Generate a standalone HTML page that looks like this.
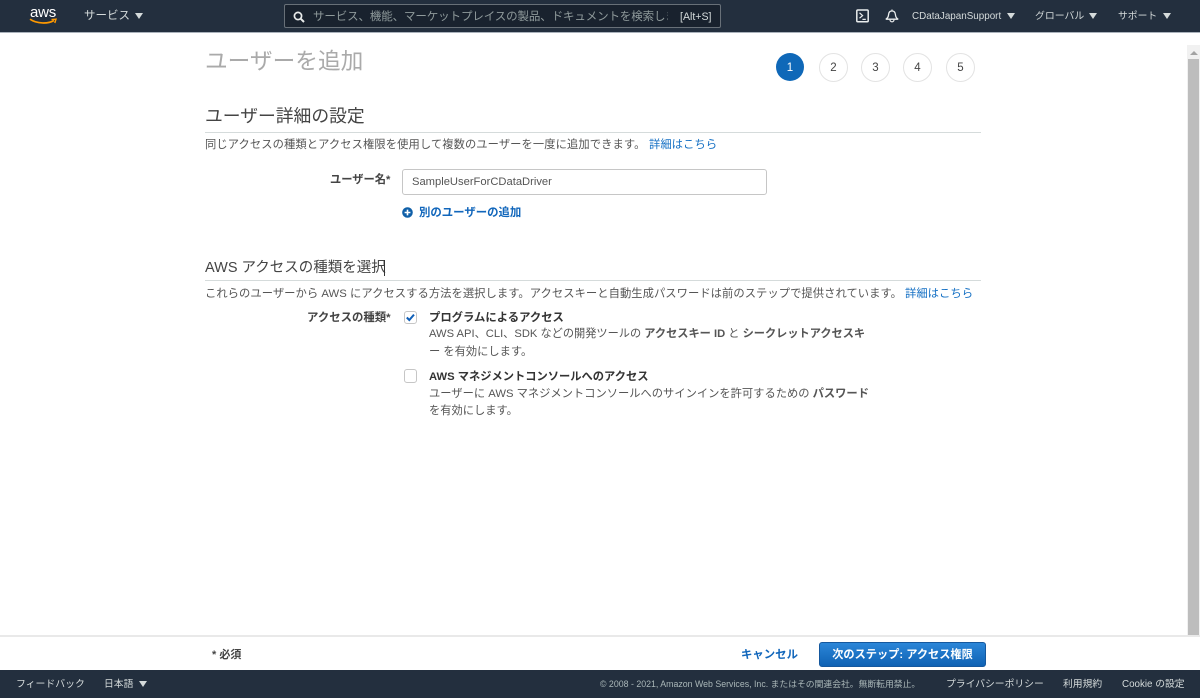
<!DOCTYPE html>
<html lang="ja"><head><meta charset="utf-8"><title>ユーザーを追加</title>
<style>
html,body{margin:0;padding:0;width:1200px;height:698px;overflow:hidden;background:#fff}
body{position:relative;font-family:"Liberation Sans","Noto Sans CJK JP",sans-serif;font-size:11.3px;color:#555}
.t{position:absolute;white-space:nowrap;line-height:16px}
.b{font-weight:700}
.nav{color:#d5dbdb}
.l{color:#1570c4}
.box{position:absolute}
.tri{position:absolute;width:0;height:0;border-left:4px solid transparent;border-right:4px solid transparent;border-top:6px solid #d5dbdb}
.c{position:absolute;top:53px;width:27px;height:27px;border:1px solid #e3e3e3;border-radius:50%;text-align:center;line-height:29px;font-size:11.5px;color:#444;background:#fff}
</style></head><body>
<div class="box" style="left:0;top:0;width:1200px;height:32px;background:#232f3e"></div>
<div class="box" style="left:0;top:32px;width:1200px;height:1px;background:#aab2bb"></div>

<div class="t" style="left:30px;top:5px;color:#fff;font-size:15px;line-height:16px;letter-spacing:-.2px">aws</div>
<svg class="box" style="left:29px;top:18px" width="28" height="7" viewBox="0 0 28 7"><path d="M1 1.2C8 6 19 6 25 2.5" fill="none" stroke="#f90" stroke-width="1.7"/><path d="M22.5 1.6L27 1.2L25.8 5" fill="none" stroke="#f90" stroke-width="1.4"/></svg>
<div class="t nav" style="left:84px;top:8px;font-size:11.5px">サービス</div>
<div class="tri" style="left:135px;top:13px"></div>

<div class="box" style="left:284px;top:4px;width:435px;height:22px;border:1px solid #687078;border-radius:2px;background:#19222e"></div>
<svg class="box" style="left:293px;top:11px" width="12" height="12" viewBox="0 0 12 12"><circle cx="5" cy="5" r="3.6" fill="none" stroke="#e8eaea" stroke-width="1.7"/><path d="M7.8 7.8L11 11" stroke="#e8eaea" stroke-width="2"/></svg>
<div class="t" style="left:313px;top:9px;font-size:11.5px;letter-spacing:-.12px;color:#8f9a9b;width:355px;overflow:hidden">サービス、機能、マーケットプレイスの製品、ドキュメントを検索します。</div>
<div class="t" style="left:680px;top:9px;font-size:10.6px;color:#d5dbdb">[Alt+S]</div>

<svg class="box" style="left:856px;top:9px" width="13" height="14" viewBox="0 0 13 14"><rect x=".8" y="1" width="11.4" height="11.8" rx="1" fill="none" stroke="#eaeded" stroke-width="1.5"/><path d="M3.5 3.8L6.6 6.6L3.5 9.2M6.4 10.4H9.8" fill="none" stroke="#eaeded" stroke-width="1.2"/></svg>
<svg class="box" style="left:885px;top:9px" width="14" height="14" viewBox="0 0 14 14"><path d="M.8 10.2C3 9.2 3.4 7.5 3.6 5.5C3.8 3.2 5 2 7 2C9 2 10.2 3.2 10.4 5.5C10.6 7.5 11 9.2 13.2 10.2Z" fill="none" stroke="#eaeded" stroke-width="1.3"/><path d="M5 10.6C5 12 6 12.8 7 12.8C8 12.8 9 12 9 10.6M7 .5V2" fill="none" stroke="#eaeded" stroke-width="1.2"/></svg>
<div class="t nav" style="left:912px;top:9px;font-size:9.85px">CDataJapanSupport</div>
<div class="tri" style="left:1007px;top:13px"></div>
<div class="t nav" style="left:1035px;top:9px;font-size:9.9px">グローバル</div>
<div class="tri" style="left:1089px;top:13px"></div>
<div class="t nav" style="left:1118px;top:9px;font-size:9.8px">サポート</div>
<div class="tri" style="left:1163px;top:13px"></div>

<div class="t" style="left:205px;top:46px;font-size:22.7px;line-height:30px;color:#aaa">ユーザーを追加</div>

<div class="box" style="left:776px;top:53px;width:28px;height:28px;border-radius:50%;background:#0f68b8;color:#fff;text-align:center;line-height:30px;font-size:11.5px">1</div>
<div class="c" style="left:819px">2</div>
<div class="c" style="left:861px">3</div>
<div class="c" style="left:903px">4</div>
<div class="c" style="left:946px">5</div>

<div class="t" style="left:205px;top:104px;font-size:17.8px;line-height:24px;color:#444">ユーザー詳細の設定</div>
<div class="box" style="left:205px;top:132px;width:776px;height:1px;background:#d5dbdb"></div>
<div class="t" style="left:205px;top:137px;font-size:11.27px;letter-spacing:.1px">同じアクセスの種類とアクセス権限を使用して複数のユーザーを一度に追加できます。</div>
<div class="t l" style="left:649px;top:137px;font-size:11.35px">詳細はこちら</div>

<div class="t b" style="left:330px;top:172px;font-size:11.25px;color:#444">ユーザー名*</div>
<div class="box" style="left:402px;top:169px;width:363px;height:24px;border:1px solid #c6c6c6;border-radius:3px;background:#fff"></div>
<div class="t" style="left:412px;top:174px;font-size:11.2px;color:#555">SampleUserForCDataDriver</div>
<svg class="box" style="left:402px;top:207px" width="11" height="11" viewBox="0 0 11 11"><circle cx="5.5" cy="5.5" r="5.3" fill="#0f5fa8"/><path d="M2.6 5.5H8.4M5.5 2.6V8.4" stroke="#fff" stroke-width="1.6"/></svg>
<div class="t b" style="left:419px;top:205px;font-size:11.4px;color:#1166bb">別のユーザーの追加</div>

<div class="t" style="left:205px;top:257px;font-size:14.5px;line-height:22px;color:#444">AWS アクセスの種類を選択</div>
<div class="box" style="left:384px;top:260px;width:1px;height:16px;background:#333"></div>
<div class="box" style="left:205px;top:280px;width:776px;height:1px;background:#d5dbdb"></div>
<div class="t" style="left:205px;top:286px;font-size:11.32px;letter-spacing:.03px">これらのユーザーから AWS にアクセスする方法を選択します。アクセスキーと自動生成パスワードは前のステップで提供されています。</div>
<div class="t l" style="left:905px;top:286px;font-size:11.35px">詳細はこちら</div>

<div class="t b" style="left:307px;top:310px;font-size:11.4px;color:#444">アクセスの種類*</div>
<div class="box" style="left:404px;top:311px;width:11px;height:11px;border:1px solid #c6c6c6;border-radius:3px;background:#fff"></div>
<svg class="box" style="left:405px;top:312px" width="11" height="11" viewBox="0 0 11 11"><path d="M1.8 5.5L4.3 8L9 2.6" fill="none" stroke="#0f5fb8" stroke-width="2"/></svg>
<div class="t b" style="left:429px;top:310px;font-size:11.35px;color:#333">プログラムによるアクセス</div>
<div class="t" style="left:429px;top:326px;font-size:11.2px">AWS API、CLI、SDK などの開発ツールの <b>アクセスキー ID</b> と <b>シークレットアクセスキ</b></div>
<div class="t" style="left:429px;top:344px;font-size:11.25px">ー を有効にします。</div>

<div class="box" style="left:404px;top:369px;width:11px;height:12px;border:1px solid #c6c6c6;border-radius:3px;background:#fff"></div>
<div class="t b" style="left:429px;top:369px;font-size:11.25px;color:#333">AWS マネジメントコンソールへのアクセス</div>
<div class="t" style="left:429px;top:386px;font-size:11.27px">ユーザーに AWS マネジメントコンソールへのサインインを許可するための <b>パスワード</b></div>
<div class="t" style="left:429px;top:403px;font-size:11.25px">を有効にします。</div>

<div class="box" style="left:1187px;top:45px;width:13px;height:590px;background:#f1f1f1"></div>
<div class="box" style="left:1188px;top:59px;width:11px;height:576px;background:#bdbdbd"></div>
<div class="box" style="left:1190px;top:51px;width:0;height:0;border-left:4px solid transparent;border-right:4px solid transparent;border-bottom:4px solid #a3a3a3"></div>

<div class="box" style="left:0;top:635px;width:1200px;height:2px;background:#e9e9e9"></div>
<div class="t b" style="left:212px;top:647px;font-size:11px;color:#444">* 必須</div>
<div class="t b" style="left:741px;top:647px;font-size:11.4px;color:#1166bb">キャンセル</div>
<div class="box" style="left:819px;top:642px;width:165px;height:23px;border:1px solid #15589e;border-radius:3px;background:linear-gradient(#2b86d8,#0f62b4);color:#fff;font-weight:700;font-size:11.2px;line-height:25px;text-align:center">次のステップ: アクセス権限</div>

<div class="box" style="left:0;top:670px;width:1200px;height:28px;background:#232f3e"></div>
<div class="t nav" style="left:16px;top:677px;font-size:9.9px">フィードバック</div>
<div class="t nav" style="left:104px;top:677px;font-size:9.8px">日本語</div>
<div class="tri" style="left:139px;top:681px"></div>
<div class="t" style="left:600px;top:676px;font-size:8.8px;color:#aab7b8">© 2008 - 2021, Amazon Web Services, Inc. またはその関連会社。無断転用禁止。</div>
<div class="t nav" style="left:946px;top:677px;font-size:9.8px">プライバシーポリシー</div>
<div class="t nav" style="left:1063px;top:677px;font-size:9.8px">利用規約</div>
<div class="t nav" style="left:1122px;top:677px;font-size:9.8px">Cookie の設定</div>
</body></html>
